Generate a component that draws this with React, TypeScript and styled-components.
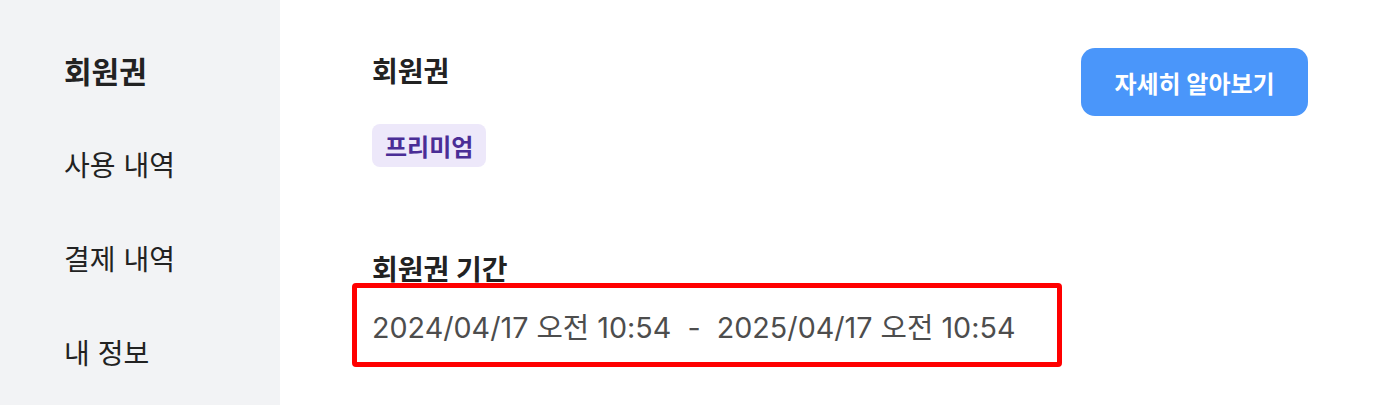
import React from 'react'
import styled, { createGlobalStyle } from 'styled-components'

const GlobalStyle = createGlobalStyle`
  html, body {
    margin: 0;
    padding: 0;
    background: #ffffff;
  }
  body {
    font-family: Inter, 'Noto Sans CJK KR', sans-serif;
    color: #1f1f1f;
  }
`

const Layout = styled.div`
  display: flex;
  width: 1398px;
  height: 405px;
  overflow: hidden;
`

const Sidebar = styled.nav`
  width: 280px;
  flex-shrink: 0;
  background-color: #f2f3f5;
  display: flex;
  flex-direction: column;
  padding: 54px 0 0 64px;
  box-sizing: border-box;
  gap: 58px;
`

const NavItem = styled.div<{ $active?: boolean }>`
  font-size: ${(p) => (p.$active ? 30 : 28)}px;
  line-height: 36px;
  font-weight: ${(p) => (p.$active ? 700 : 400)};
  color: #222;
  cursor: pointer;
`

const Main = styled.main`
  flex: 1;
  display: flex;
  justify-content: space-between;
  align-items: flex-start;
  padding: 48px 90px 0 92px;
`

const Info = styled.div`
  display: flex;
  flex-direction: column;
  margin-top: 6px;
`

const SectionTitle = styled.h2`
  margin: 0;
  font-size: 28px;
  line-height: 36px;
  font-weight: 700;
  color: #222;
`

const Badge = styled.span`
  align-self: flex-start;
  margin-top: 34px;
  padding: 0 13px;
  height: 43px;
  display: flex;
  align-items: center;
  border-radius: 8px;
  background-color: #ede8fa;
  color: #4a2d96;
  font-size: 24px;
  font-weight: 700;
`

const PeriodBlock = styled.div`
  margin-top: 85px;
  display: flex;
  flex-direction: column;
`

const Highlight = styled.div`
  margin: -5px 0 0 -20px;
  width: 710px;
  height: 84px;
  box-sizing: border-box;
  border: 5px solid #ff0000;
  border-radius: 4px;
  padding-left: 15px;
  display: flex;
  align-items: center;
  font-size: 28.7px;
  color: #4d4d4d;
  white-space: pre;
`

const MoreButton = styled.button`
  width: 227px;
  height: 68px;
  border: none;
  border-radius: 14px;
  background-color: #4a96fa;
  color: #ffffff;
  font-family: inherit;
  font-size: 24px;
  font-weight: 700;
  cursor: pointer;
`

const navItems = ['회원권', '사용 내역', '결제 내역', '내 정보']

const App = () => {
  return (
    <>
      <GlobalStyle />
      <Layout>
        <Sidebar>
          {navItems.map((item, i) => (
            <NavItem key={item} $active={i === 0}>
              {item}
            </NavItem>
          ))}
        </Sidebar>
        <Main>
          <Info>
            <SectionTitle>회원권</SectionTitle>
            <Badge>프리미엄</Badge>
            <PeriodBlock>
              <SectionTitle>회원권 기간</SectionTitle>
              <Highlight>{'2024/04/17 오전 10:54  -  2025/04/17 오전 10:54'}</Highlight>
            </PeriodBlock>
          </Info>
          <MoreButton>자세히 알아보기</MoreButton>
        </Main>
      </Layout>
    </>
  )
}

export default App
